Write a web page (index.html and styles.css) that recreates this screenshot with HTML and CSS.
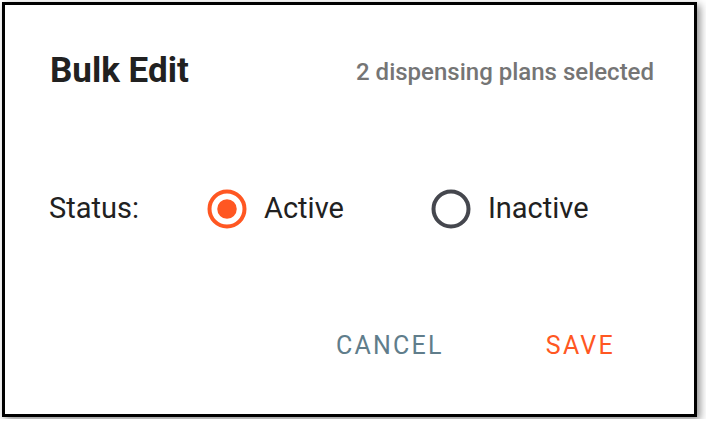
FILE: index.html
```html
<!DOCTYPE html>
<html lang="en">
<head>
<meta charset="utf-8">
<title>Bulk Edit</title>
<link rel="stylesheet" href="styles.css">
</head>
<body>
<div class="dialog">
  <div class="header">
    <h1 class="title">Bulk Edit</h1>
    <span class="subtitle">2 dispensing plans selected</span>
  </div>
  <div class="status-row">
    <span class="status-label">Status:</span>
    <div class="radio-group">
      <label class="option">
        <svg class="radio radio-on" viewBox="0 0 40 40" width="40" height="40">
          <circle cx="20" cy="20" r="17.5" fill="none" stroke="#ff5722" stroke-width="4"/>
          <circle cx="20" cy="20" r="9.75" fill="#ff5722"/>
        </svg>
        <span class="option-text">Active</span>
      </label>
      <label class="option">
        <svg class="radio radio-off" viewBox="0 0 40 40" width="40" height="40">
          <circle cx="20" cy="20" r="17.5" fill="none" stroke="#45474e" stroke-width="4"/>
        </svg>
        <span class="option-text">Inactive</span>
      </label>
    </div>
  </div>
  <div class="actions">
    <button class="btn btn-cancel" type="button">Cancel</button>
    <button class="btn btn-save" type="button">Save</button>
  </div>
</div>
</body>
</html>
```

FILE: styles.css
```css
* { box-sizing: content-box; }
html, body { margin: 0; padding: 0; background: #ffffff; }
body {
  padding: 2px;
  font-family: Roboto, "Liberation Sans", Arial, sans-serif;
  color: #212121;
}
.dialog {
  width: 689px;
  height: 409px;
  border: 3px solid #000000;
  background: #ffffff;
  box-shadow: 3px 3px 8px rgba(0, 0, 0, 0.45);
  display: flex;
  flex-direction: column;
}
.header {
  margin-top: 46px;
  height: 40px;
  padding: 0 40px 0 45px;
  display: flex;
  align-items: center;
  justify-content: space-between;
}
.title {
  margin: 0;
  font-size: 35px;
  line-height: 40px;
  font-weight: 700;
  color: #212121;
}
.subtitle {
  font-size: 24px;
  line-height: 40px;
  font-weight: 500;
  color: #757575;
  margin-top: 2px;
}
.status-row {
  margin-top: 94px;
  height: 47px;
  padding-left: 44px;
  display: flex;
  align-items: center;
}
.status-label {
  flex: none;
  width: 158px;
  font-size: 29px;
  line-height: 47px;
  color: #212121;
}
.radio-group {
  display: flex;
  align-items: center;
  gap: 87px;
}
.option {
  display: flex;
  align-items: center;
  gap: 17px;
}
.radio { display: block; flex: none; }
.option-text {
  font-size: 29px;
  line-height: 47px;
  color: #212121;
}
.actions {
  margin-top: 101px;
  height: 26px;
  padding-right: 79px;
  display: flex;
  justify-content: flex-end;
  align-items: center;
  gap: 102px;
}
.btn {
  border: 0;
  background: none;
  padding: 0;
  margin: 0;
  font-family: Roboto, "Liberation Sans", Arial, sans-serif;
  font-size: 25px;
  line-height: 26px;
  font-weight: 400;
  letter-spacing: 0.09em;
  text-transform: uppercase;
  cursor: pointer;
}
.btn-cancel { color: #607d8b; }
.btn-save { color: #ff5722; }
```
